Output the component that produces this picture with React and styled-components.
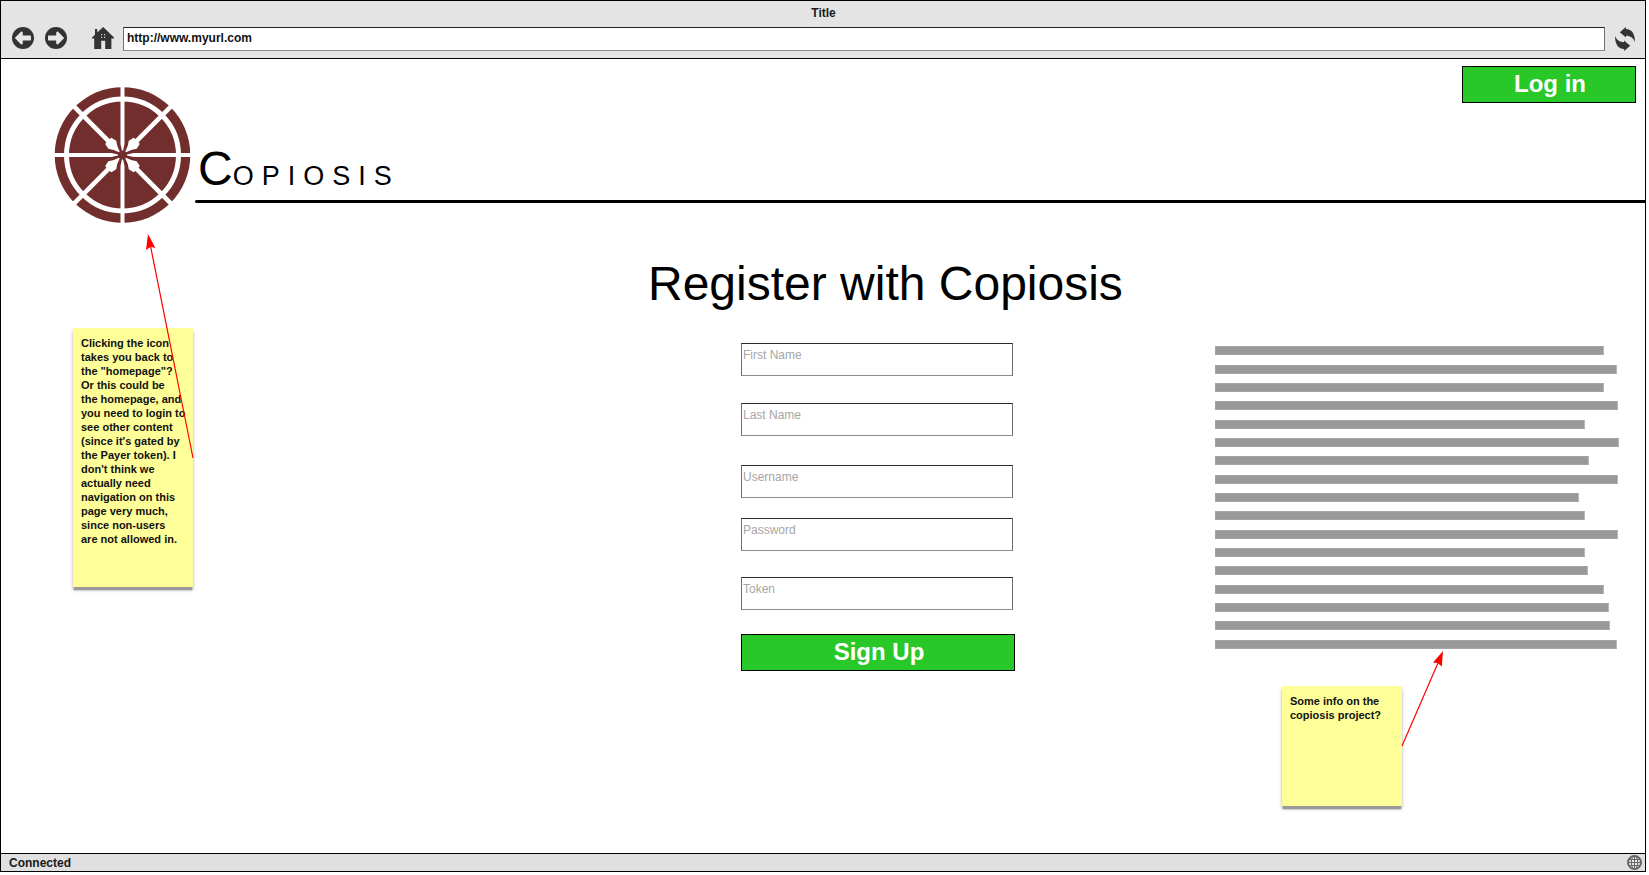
import React from "react";
import styled, { createGlobalStyle } from "styled-components";

const GlobalStyle = createGlobalStyle`
  *, *::before, *::after { box-sizing: border-box; }
  body {
    margin: 0;
    background: #fff;
    color: #000;
    font-family: "Liberation Sans", Arial, sans-serif;
  }
`;

/* ---------- browser frame ---------- */

const Frame = styled.div`
  display: flex;
  flex-direction: column;
  min-height: calc(100vh - 3px);
  margin-right: 3px;
  border: 1px solid #000;
`;

const Chrome = styled.header`
  padding: 4px 10px 7px 11px;
  background: #e4e4e4;
  border-bottom: 1px solid #000;
`;

const WindowTitle = styled.div`
  font-size: 12px;
  font-weight: bold;
  line-height: 16px;
  text-align: center;
  color: #1a1a1a;
`;

const Toolbar = styled.div`
  display: flex;
  align-items: flex-start;
  margin-top: 6px;
`;

const ToolButton = styled.button`
  display: block;
  flex: none;
  padding: 0;
  border: 0;
  background: none;
  margin-right: ${({ $after = 0 }) => $after}px;

  svg {
    display: block;
  }
`;

const Address = styled.input`
  flex: 1;
  min-width: 0;
  height: 24px;
  margin-right: 10px;
  padding: 0 3px 2px;
  border: 1px solid #6e6e6e;
  border-top-color: #222;
  border-bottom-color: #8c8c8c;
  background: #fff;
  color: #111;
  font: bold 12px "Liberation Sans", Arial, sans-serif;
`;

const StatusBar = styled.footer`
  display: flex;
  align-items: center;
  justify-content: space-between;
  height: 18px;
  padding: 0 3px 0 8px;
  border-top: 1px solid #000;
  background: #e0e0e0;
  color: #1a1a1a;
  font-size: 12px;
  font-weight: bold;
  line-height: 16px;
`;

/* ---------- page ---------- */

const Page = styled.main`
  flex: 1;
`;

const Masthead = styled.div`
  display: flex;
  align-items: flex-start;
  gap: 4px;
  padding-left: 53px;
`;

const HomeLink = styled.a`
  flex: none;
  margin-top: 28px;

  svg {
    display: block;
  }
`;

const Banner = styled.div`
  display: flex;
  flex: 1;
  flex-direction: column;
  min-width: 0;
`;

const GreenButton = styled.button`
  height: 37px;
  padding: 0 0 2px 2px;
  border: 1px solid #000;
  background: #28c828;
  color: #fff;
  font: bold 24px "Liberation Sans", Arial, sans-serif;
`;

const LoginButton = styled(GreenButton)`
  align-self: flex-end;
  width: 174px;
  margin: 7px 9px 40px;
`;

const Wordmark = styled.div`
  padding: 0 0 5px 3px;
  font-size: 27px;
  line-height: 28px;
  letter-spacing: 8px;
  white-space: nowrap;
`;

const Initial = styled.span`
  font-size: 48px;
  line-height: 52px;
  letter-spacing: 0;
`;

const Rule = styled.hr`
  width: 100%;
  height: 3px;
  margin: 0;
  border: 0;
  border-radius: 2px 0 0 2px;
  background: #000;
`;

const Columns = styled.div`
  display: grid;
  grid-template-columns: 647fr 567fr 430fr;
`;

const NoteColumn = styled.div`
  padding: 105px 0 0 72px;
`;

const FormColumn = styled.section`
  padding-top: 33px;
`;

const InfoColumn = styled.section`
  padding-top: 123px;
`;

const Heading = styled.h1`
  margin: 0 0 31px;
  font-size: 48px;
  font-weight: normal;
  line-height: 56px;
  white-space: nowrap;
`;

const Form = styled.form`
  display: flex;
  flex-direction: column;
  align-items: flex-start;
  margin-left: 93px;
`;

const Field = styled.input`
  width: 272px;
  height: 33px;
  margin-bottom: ${({ $after }) => $after}px;
  padding: 0 1px 9px;
  border: 1px solid #6e6e6e;
  border-top-color: #2a2a2a;
  border-bottom-color: #8c8c8c;
  border-radius: 0;
  background: #fff;
  font: 12px "Liberation Sans", Arial, sans-serif;

  &::placeholder {
    color: #a6a6a6;
    opacity: 1;
  }
`;

const SignUpButton = styled(GreenButton)`
  width: 274px;
`;

const Bar = styled.div`
  width: ${({ $width }) => $width}px;
  height: 9px;
  margin-bottom: 9px;
  border: 1px solid #a4a4a4;
  border-right-color: #b8b8b8;
  background: #999;

  &:nth-child(3n + 1) {
    margin-bottom: 10px;
  }
`;

const Note = styled.aside`
  position: relative;
  width: 120px;
  min-height: ${({ $tall }) => ($tall ? 259 : 120)}px;
  padding: 8px 0 8px 8px;
  background: #ffff99;
  box-shadow: 0 4px 1px -1px #999, 0 3px 3px #aaa;
  color: #111;
  font-size: 11px;
  font-weight: bold;
  line-height: 14px;
  white-space: pre;
`;

const InfoNote = styled(Note)`
  margin: 37px 0 0 67px;
`;

const Arrow = styled.svg`
  position: absolute;
  left: ${({ $left }) => $left}px;
  top: ${({ $top }) => $top}px;
  overflow: visible;
  pointer-events: none;
`;

/* ---------- drawings ---------- */

const ArrowIcon = ({ flip }) => (
  <svg width="22" height="22" viewBox="0 0 22 22" aria-hidden="true">
    <circle cx="11" cy="11" r="11" fill="#333" />
    <path
      d="M2.8 11 L9.4 4.3 L10.8 5.6 V8.4 H18.4 L19 9 V13 L18.4 13.6 H10.8 V16.4 L9.4 17.7 Z"
      fill="#e8e8e8"
      transform={flip ? "matrix(-1 0 0 1 22 0)" : undefined}
    />
  </svg>
);

const HomeIcon = () => (
  <svg width="22" height="22" viewBox="0 0 22 22" aria-hidden="true">
    <path
      d="M11.2 0 L22 10.6 V11.4 H19.4 V22 H13.2 V13.8 H9.2 V22 H2.2 V11.4 H0 V10.6 L3 7.8 V2 H5.2 V5.6 Z"
      fill="#333"
    />
    <path d="M9 7h1.2v1.2H9z M12 7h1.2v1.2h-1.2z M9 9.8h1.2V11H9z M12 9.8h1.2V11h-1.2z" fill="#ccc" />
  </svg>
);

const ReloadIcon = () => (
  <svg width="20" height="24" viewBox="0 0 20 24" aria-hidden="true">
    <g fill="#333">
      <path d="M4.8 5.2 L10.8 0 V2 C17 2.2 20 7 20 15 C18.2 11 15.4 8.8 11 8.8 V10.6 Z" />
      <path d="M15.2 18.8 L9.2 24 V22 C3 21.8 0 17 0 9 C1.8 13 4.6 15.2 9 15.2 V13.4 Z" />
    </g>
  </svg>
);

const GlobeIcon = () => (
  <svg width="15" height="15" viewBox="0 0 15 15" fill="none" stroke="#666" aria-hidden="true">
    <circle cx="7.5" cy="7.5" r="6.5" strokeWidth="2" fill="#e8e8e8" />
    <path d="M7.5 1v13 M1 7.5h13 M2 4.5h11 M2 10.5h11" />
    <ellipse cx="7.5" cy="7.5" rx="3.2" ry="6.5" />
  </svg>
);

const WheelLogo = () => (
  <svg width="137" height="136" viewBox="-68.5 -68 137 136" role="img" aria-label="Copiosis">
    <circle r="67.8" fill="#722e2d" />
    <circle r="56" fill="none" stroke="#fff" strokeWidth="5" />
    <g fill="#fff">
      {[0, 90, 180, 270].map((angle) => (
        <path key={angle} transform={`rotate(${angle})`} d="M-2 -69 H2 V-11 L0.6 -4.5 H-0.6 L-2 -11 Z" />
      ))}
      {[45, 135, 225, 315].map((angle) => (
        <path
          key={angle}
          transform={`rotate(${angle})`}
          d="M-2.3 -69 H2.3 V-20.5 L4.4 -20 L5.6 -14.5 Q2 -10 0.5 -4.5 H-0.5 Q-2 -10 -5.6 -14.5 L-4.4 -20 L-2.3 -20.5 Z"
        />
      ))}
    </g>
  </svg>
);

/* ---------- content ---------- */

const fields = [
  { name: "firstName", label: "First Name", after: 27 },
  { name: "lastName", label: "Last Name", after: 29 },
  { name: "username", label: "Username", after: 20 },
  { name: "password", label: "Password", type: "password", after: 26 },
  { name: "token", label: "Token", after: 24 },
];

const bars = [389, 402, 389, 403, 370, 404, 374, 403, 364, 370, 403, 370, 373, 389, 394, 395, 402];

const homeNote = `Clicking the icon
takes you back to
the "homepage"?
Or this could be
the homepage, and
you need to login to
see other content
(since it's gated by
the Payer token). I
don't think we
actually need
navigation on this
page very much,
since non-users
are not allowed in.`;

const infoNote = `Some info on the
copiosis project?`;

export default function App() {
  return (
    <>
      <GlobalStyle />
      <Frame>
        <Chrome>
          <WindowTitle>Title</WindowTitle>
          <Toolbar>
            <ToolButton type="button" aria-label="Back" $after={11}>
              <ArrowIcon />
            </ToolButton>
            <ToolButton type="button" aria-label="Forward" $after={25}>
              <ArrowIcon flip />
            </ToolButton>
            <ToolButton type="button" aria-label="Home" $after={9}>
              <HomeIcon />
            </ToolButton>
            <Address type="text" aria-label="Address" defaultValue="http://www.myurl.com" />
            <ToolButton type="button" aria-label="Reload">
              <ReloadIcon />
            </ToolButton>
          </Toolbar>
        </Chrome>

        <Page>
          <Masthead>
            <HomeLink href="#home">
              <WheelLogo />
            </HomeLink>
            <Banner>
              <LoginButton type="button">Log in</LoginButton>
              <Wordmark>
                <Initial>C</Initial>OPIOSIS
              </Wordmark>
              <Rule />
            </Banner>
          </Masthead>

          <Columns>
            <NoteColumn>
              <Note $tall>
                {homeNote}
                <Arrow $left={75} $top={-94} width="45" height="224" viewBox="0 0 45 224" aria-hidden="true">
                  <path d="M2.5 12 L45 224" stroke="#f00" strokeWidth="1.2" />
                  <path d="M0 0 L-2 16 L2.6 12.8 L7.4 14 Z" fill="#f00" />
                </Arrow>
              </Note>
            </NoteColumn>

            <FormColumn>
              <Heading>Register with Copiosis</Heading>
              <Form onSubmit={(event) => event.preventDefault()}>
                {fields.map(({ name, label, type = "text", after }) => (
                  <Field key={name} name={name} type={type} placeholder={label} aria-label={label} $after={after} />
                ))}
                <SignUpButton type="submit">Sign Up</SignUpButton>
              </Form>
            </FormColumn>

            <InfoColumn>
              <div>
                {bars.map((width, index) => (
                  <Bar key={index} $width={width} />
                ))}
              </div>
              <InfoNote>
                {infoNote}
                <Arrow $left={120} $top={-35} width="41" height="95" viewBox="0 0 41 95" aria-hidden="true">
                  <path d="M0 95 L36 12" stroke="#f00" strokeWidth="1.2" />
                  <path d="M41 0 L31 11.6 L35.6 12 L39.8 15.4 Z" fill="#f00" />
                </Arrow>
              </InfoNote>
            </InfoColumn>
          </Columns>
        </Page>

        <StatusBar>
          <span>Connected</span>
          <GlobeIcon />
        </StatusBar>
      </Frame>
    </>
  );
}
